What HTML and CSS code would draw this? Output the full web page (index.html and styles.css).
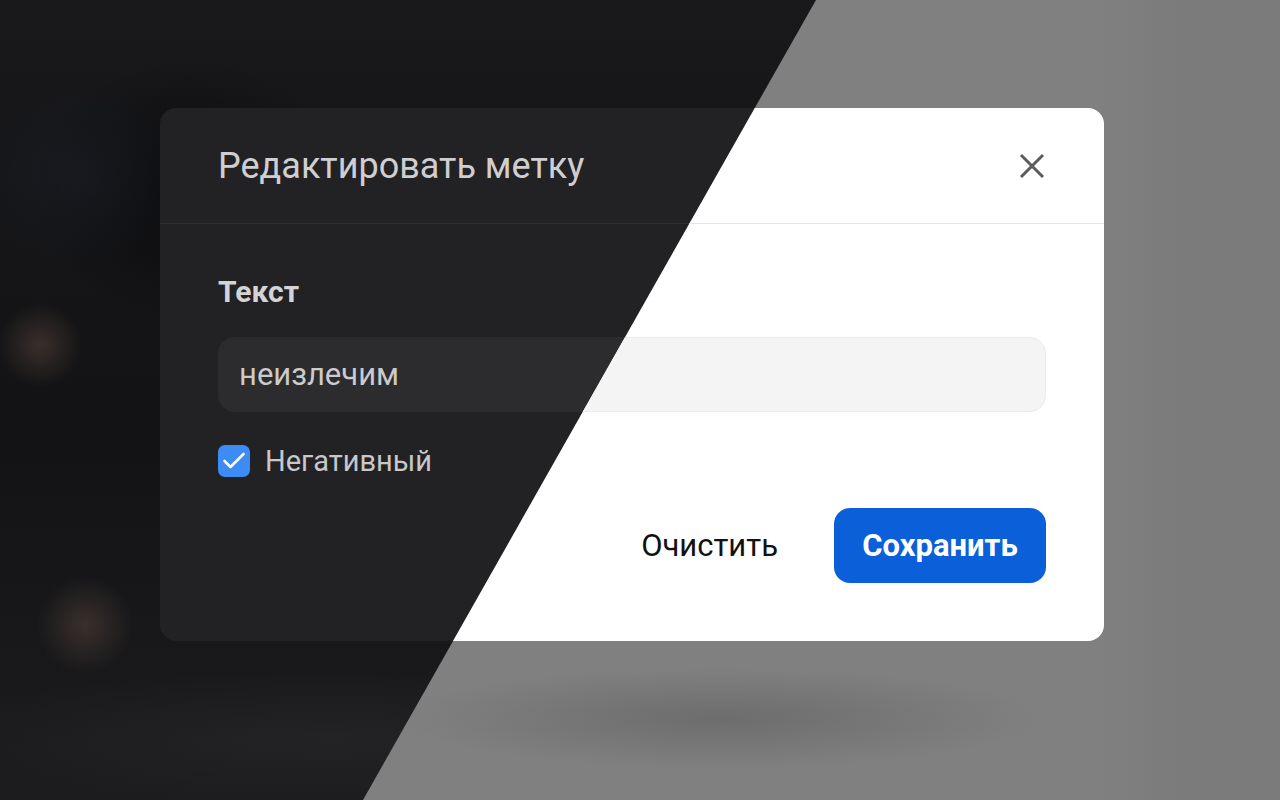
FILE: index.html
```html
<!DOCTYPE html>
<html lang="ru">
<head>
<meta charset="utf-8">
<title>Редактировать метку</title>
<link rel="stylesheet" href="styles.css">
</head>
<body>
<div class="stage">
  <div class="scene scene-dark">
    <div class="backdrop backdrop-dark"></div>
    <section class="dialog">
      <header class="dialog-head">
        <h1 class="dialog-title">Редактировать метку</h1>
        <svg class="close" viewBox="0 0 26 26" width="26" height="26"><path d="M2 2L24 24M24 2L2 24"/></svg>
      </header>
      <div class="dialog-body">
        <label class="field-label">Текст</label>
        <div class="input">неизлечим</div>
        <div class="check-row">
          <span class="checkbox"><svg viewBox="0 0 32 32" width="32" height="32"><path d="M6.5 16L12.5 22L25.5 9"/></svg></span>
          <span class="check-label">Негативный</span>
        </div>
        <div class="actions">
          <button class="btn btn-plain">Очистить</button>
          <button class="btn btn-primary">Сохранить</button>
        </div>
      </div>
    </section>
  </div>
  <div class="scene scene-light" aria-hidden="true">
    <div class="backdrop backdrop-light"></div>
    <section class="dialog">
      <header class="dialog-head">
        <div class="dialog-title">Редактировать метку</div>
        <svg class="close" viewBox="0 0 26 26" width="26" height="26"><path d="M2 2L24 24M24 2L2 24"/></svg>
      </header>
      <div class="dialog-body">
        <div class="field-label">Текст</div>
        <div class="input">неизлечим</div>
        <div class="check-row">
          <span class="checkbox"><svg viewBox="0 0 32 32" width="32" height="32"><path d="M6.5 16L12.5 22L25.5 9"/></svg></span>
          <span class="check-label">Негативный</span>
        </div>
        <div class="actions">
          <button class="btn btn-plain">Очистить</button>
          <button class="btn btn-primary">Сохранить</button>
        </div>
      </div>
    </section>
  </div>
</div>
</body>
</html>
```

FILE: styles.css
```css
* { box-sizing: border-box; }
html, body { margin: 0; padding: 0; }
body {
  width: 1280px;
  height: 800px;
  overflow: hidden;
  font-family: Roboto, "Liberation Sans", Arial, sans-serif;
  background: #151517;
}
.stage {
  position: relative;
  width: 1280px;
  height: 800px;
}
.scene {
  position: absolute;
  inset: 0;
  display: flex;
  align-items: flex-start;
  padding: 108px 0 0 160px;
}
.scene-light {
  clip-path: polygon(816px 0, 1280px 0, 1280px 800px, 363px 800px);
}
.backdrop {
  position: absolute;
  inset: 0;
}
.backdrop-dark {
  background:
    radial-gradient(circle 42px at 40px 345px, rgba(66,54,48,0.8), rgba(66,54,48,0) 100%),
    radial-gradient(circle 48px at 85px 625px, rgba(66,54,48,0.8), rgba(66,54,48,0) 100%),
    radial-gradient(ellipse 110px 90px at 80px 175px, rgba(24,28,36,0.7), rgba(24,28,36,0) 100%),
    radial-gradient(ellipse 160px 130px at 190px 190px, rgba(9,9,10,0.85), rgba(9,9,10,0) 100%),
    radial-gradient(ellipse 420px 70px at 330px 740px, rgba(36,36,38,0.9), rgba(36,36,38,0) 100%),
    linear-gradient(180deg, #19191b 0%, #161618 18%, #131315 55%, #19191b 85%, #1c1c1e 100%);
}
.backdrop-light {
  background:
    radial-gradient(ellipse 320px 50px at 720px 718px, rgba(104,104,104,0.8), rgba(104,104,104,0) 100%),
    linear-gradient(90deg, #808080 0%, #808080 86%, #7b7b7b 92%, #7b7b7b 100%);
}
.dialog {
  position: relative;
  width: 944px;
  border-radius: 16px;
  display: flex;
  flex-direction: column;
}
.scene-dark .dialog { background: #222224; color: #d2d2d4; }
.scene-light .dialog { background: #ffffff; color: #1a1a1a; }

.dialog-head {
  height: 116px;
  padding: 0 58px;
  display: flex;
  align-items: center;
  justify-content: space-between;
  border-bottom: 1px solid #2e2e30;
}
.scene-light .dialog-head { border-bottom-color: #e6e6e6; }
.dialog-title {
  margin: 0;
  font-size: 36px;
  font-weight: 400;
  line-height: 44px;
}
.scene-dark .dialog-title { color: #cfcfd1; }
.scene-light .dialog-title { color: #1f1f1f; }
.close {
  margin-right: 1px;
  fill: none;
  stroke-width: 3;
}
.scene-dark .close { stroke: #b0b0b2; }
.scene-light .close { stroke: #5c5c5c; }

.dialog-body {
  padding: 50px 58px 58px;
  display: flex;
  flex-direction: column;
}
.field-label {
  font-size: 30px;
  font-weight: 700;
  line-height: 36px;
}
.scene-dark .field-label { color: #d4d4d6; }
.input {
  margin-top: 27px;
  height: 75px;
  border-radius: 16px;
  padding: 0 20px;
  display: flex;
  align-items: center;
  font-size: 31px;
}
.scene-dark .input { background: #2c2c2e; color: #cbcbcd; border: 1px solid #2c2c2e; }
.scene-light .input { background: #f4f4f4; color: #1a1a1a; border: 1px solid #ebebeb; }

.check-row {
  margin-top: 33px;
  height: 32px;
  display: flex;
  align-items: center;
  gap: 15px;
}
.checkbox {
  width: 32px;
  height: 32px;
  border-radius: 7px;
  background: #3d8bf5;
  display: flex;
}
.checkbox svg {
  fill: none;
  stroke: #ffffff;
  stroke-width: 2.6;
  stroke-linecap: round;
  stroke-linejoin: round;
}
.check-label {
  font-size: 29px;
  line-height: 32px;
}
.scene-dark .check-label { color: #c8c8ca; }
.scene-light .check-label { color: #1a1a1a; }

.actions {
  margin-top: 31px;
  display: flex;
  justify-content: flex-end;
  gap: 28px;
}
.btn {
  height: 75px;
  padding: 0 28px;
  border: 0;
  border-radius: 16px;
  font-family: inherit;
  font-size: 31px;
  background: transparent;
}
.btn-plain { font-weight: 400; }
.scene-dark .btn-plain { color: #e0e0e0; }
.scene-light .btn-plain { color: #111111; }
.btn-primary {
  background: #0b5fd8;
  color: #ffffff;
  font-weight: 700;
  width: 212px;
  padding: 0;
}
```
